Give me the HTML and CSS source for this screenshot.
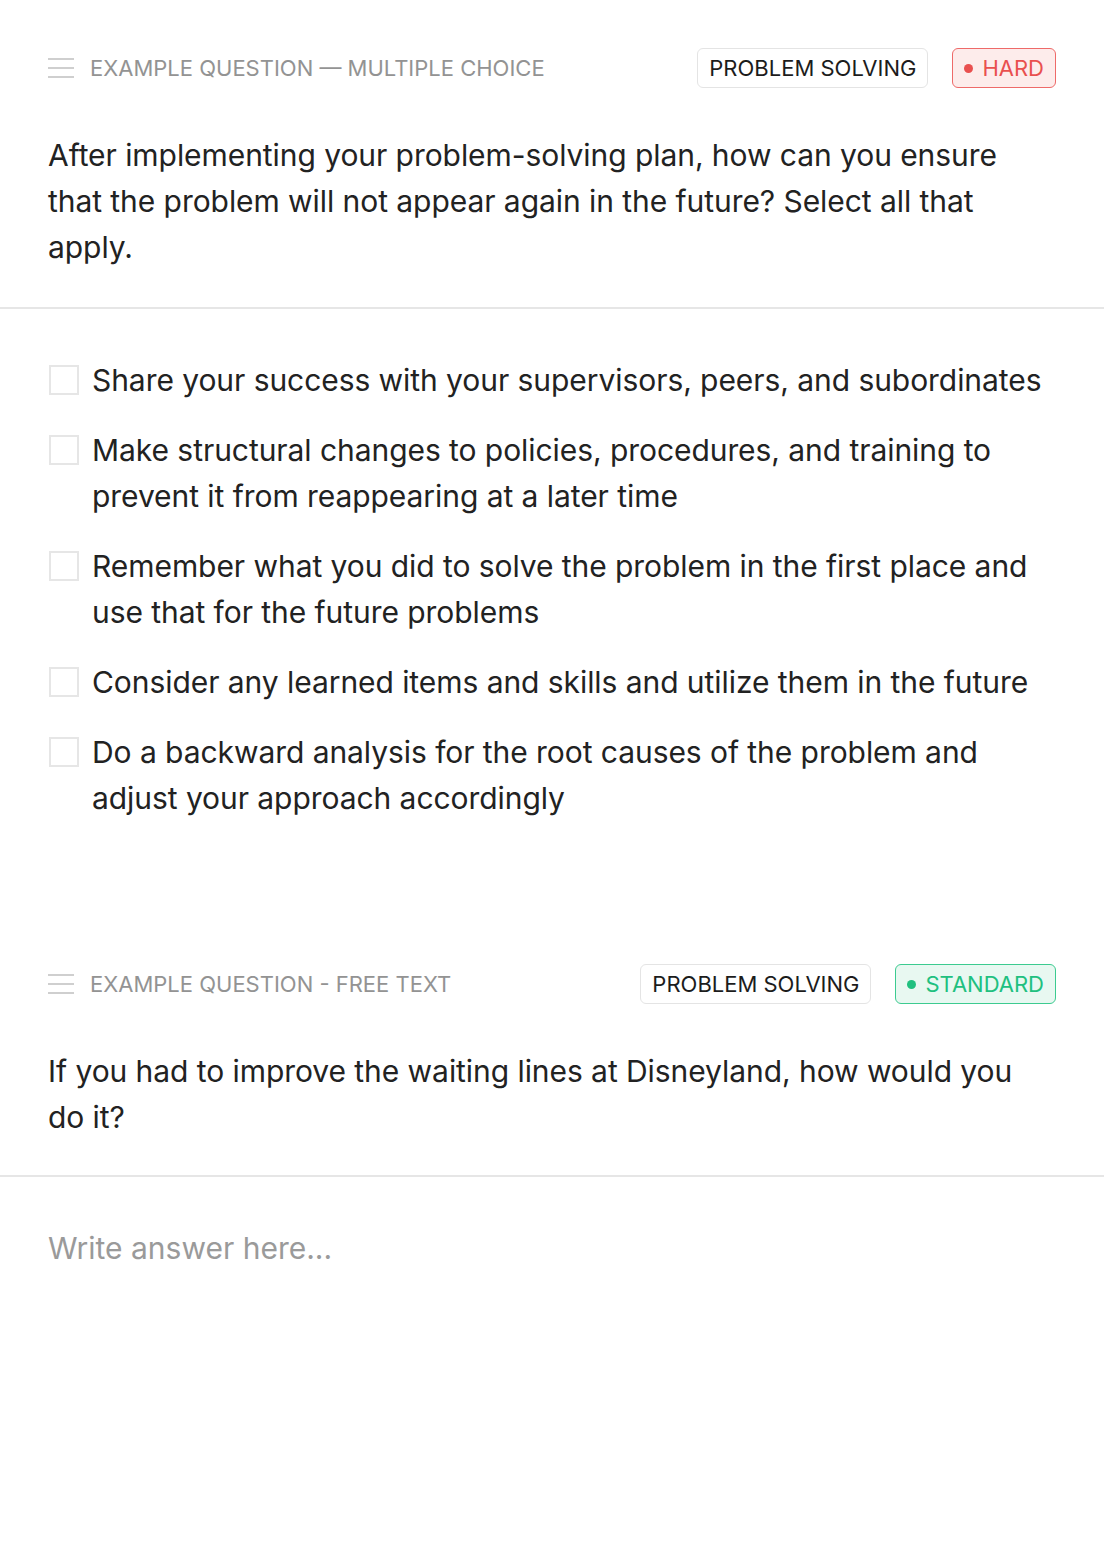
FILE: index.html
```html
<!DOCTYPE html>
<html lang="en">
<head>
    <meta charset="UTF-8">
    <meta name="viewport" content="width=device-width, initial-scale=1.0">
    <title>Example Questions</title>
    <link rel="stylesheet" href="styles.css">
</head>
<body>
    <div class="question">
        <div class="question-header">
            <div class="question-title">
                <span class="handle"><i></i><i></i><i></i></span>
                <span>EXAMPLE QUESTION — MULTIPLE CHOICE</span>
            </div>
            <div class="tags">
                <span class="tag">PROBLEM SOLVING</span>
                <span class="tag hard"><b class="dot"></b>HARD</span>
            </div>
        </div>
        <p class="question-text">After implementing your problem-solving plan, how can you ensure that the problem will not appear again in the future? Select all that apply.</p>
    </div>
    <div class="answers">
        <label class="option"><span class="box"></span><span>Share your success with your supervisors, peers, and subordinates</span></label>
        <label class="option"><span class="box"></span><span>Make structural changes to policies, procedures, and training to prevent it from reappearing at a later time</span></label>
        <label class="option"><span class="box"></span><span>Remember what you did to solve the problem in the first place and use that for the future problems</span></label>
        <label class="option"><span class="box"></span><span>Consider any learned items and skills and utilize them in the future</span></label>
        <label class="option"><span class="box"></span><span>Do a backward analysis for the root causes of the problem and adjust your approach accordingly</span></label>
    </div>

    <div class="question second">
        <div class="question-header">
            <div class="question-title">
                <span class="handle"><i></i><i></i><i></i></span>
                <span>EXAMPLE QUESTION - FREE TEXT</span>
            </div>
            <div class="tags">
                <span class="tag">PROBLEM SOLVING</span>
                <span class="tag standard"><b class="dot"></b>STANDARD</span>
            </div>
        </div>
        <p class="question-text">If you had to improve the waiting lines at Disneyland, how would you do it?</p>
    </div>
    <div class="answers">
        <div class="placeholder">Write answer here...</div>
    </div>
</body>
</html>
```

FILE: styles.css
```css
body {
    font-family: Inter, 'Noto Sans', sans-serif;
    background-color: #fff;
    color: #222;
    margin: 0;
}
.question {
    padding: 48px 48px 37px;
    border-bottom: 2px solid #e6e6e6;
}
.question.second {
    padding-top: 95px;
    padding-bottom: 35px;
}
.question-header {
    display: flex;
    align-items: center;
    justify-content: space-between;
}
.question-title {
    display: flex;
    align-items: center;
    gap: 16px;
    font-size: 22px;
    color: #939393;
}
.handle {
    display: flex;
    flex-direction: column;
    gap: 7px;
    width: 26px;
}
.handle i {
    display: block;
    height: 2px;
    background-color: #cfcfcf;
}
.tags {
    display: flex;
    gap: 24px;
}
.tag {
    display: flex;
    align-items: center;
    gap: 9px;
    font-size: 22px;
    line-height: 26px;
    padding: 6px 11px;
    border: 1px solid #e4e4e4;
    border-radius: 6px;
    color: #1c1c1c;
}
.tag .dot {
    width: 9px;
    height: 9px;
    border-radius: 50%;
    background-color: currentColor;
}
.tag.hard {
    color: #e9504f;
    background-color: #fdeceb;
    border-color: #ee6a69;
}
.tag.standard {
    color: #20c07f;
    background-color: #e8f8f1;
    border-color: #3ccb90;
}
.question-text {
    margin: 44px 0 0;
    font-size: 30px;
    line-height: 46px;
    letter-spacing: -0.06px;
}
.answers {
    padding: 48px;
}
.option {
    display: flex;
    align-items: flex-start;
    gap: 13px;
    font-size: 30px;
    line-height: 46px;
    letter-spacing: -0.06px;
    margin-bottom: 24px;
}
.option:last-child {
    margin-bottom: 0;
}
.box {
    flex: none;
    width: 26px;
    height: 26px;
    margin: 8px 0 0 1px;
    border: 2px solid #e6e6e6;
}
.placeholder {
    font-size: 30px;
    line-height: 46px;
    color: #9a9a9a;
}
```
